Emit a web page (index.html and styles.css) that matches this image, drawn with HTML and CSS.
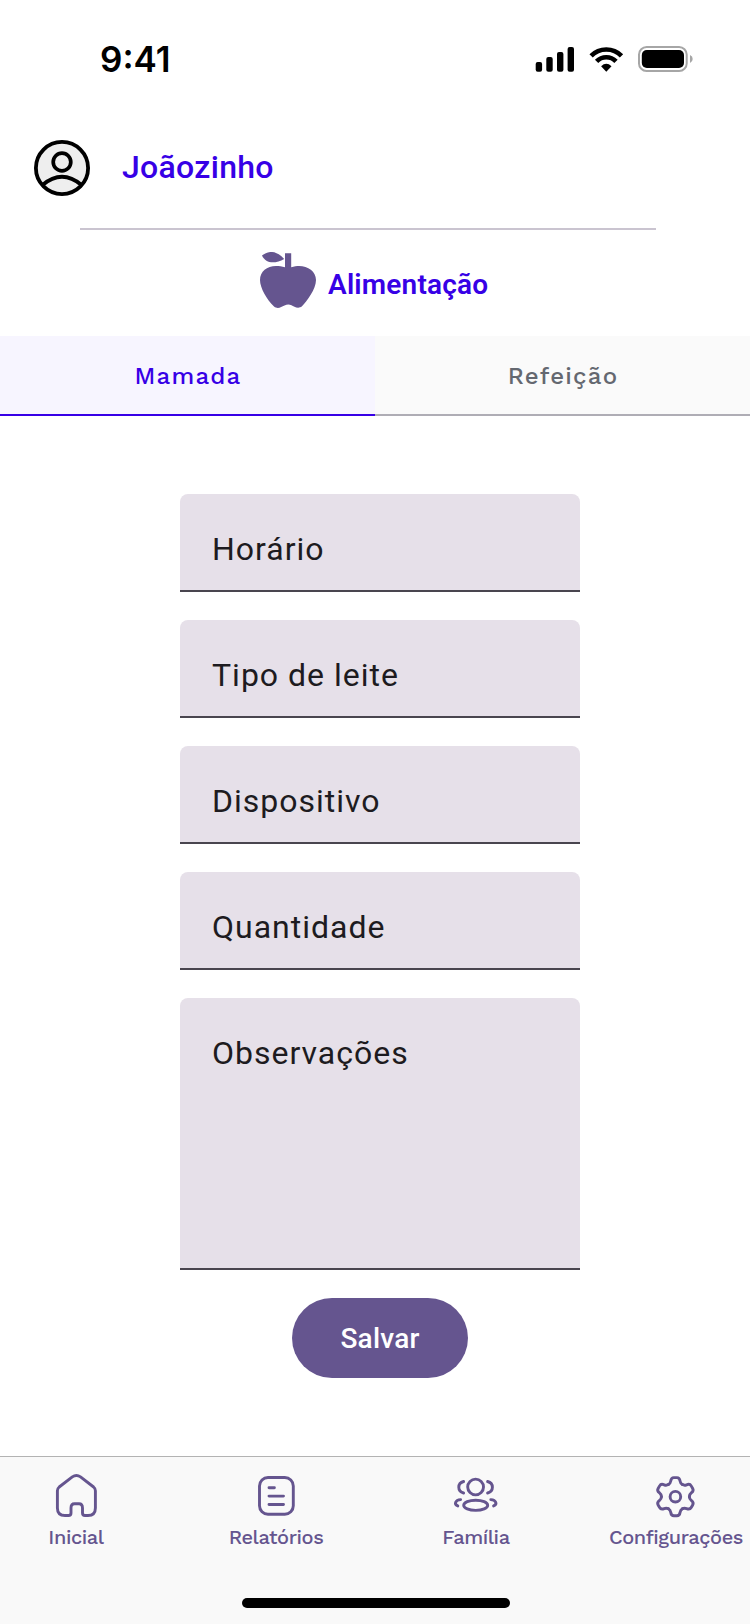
FILE: index.html
```html
<!DOCTYPE html>
<html lang="pt-BR">
<head>
<meta charset="utf-8">
<title>Alimentação</title>
<link rel="stylesheet" href="styles.css">
</head>
<body>
<div class="screen">
  <div class="status">
    <span class="time">9:41</span>
    <div class="status-icons">
      <svg width="39" height="26" viewBox="0 0 39 26"><rect x=".7" y="16" width="6.4" height="9.8" rx="2"/><rect x="11.3" y="11" width="6.4" height="14.8" rx="2"/><rect x="22" y="6" width="6.4" height="19.8" rx="2"/><rect x="32.6" y="1" width="6.4" height="24.8" rx="2"/></svg>
      <svg class="wifi" width="35" height="26" viewBox="0 -1 35 26"><g fill="none" stroke="#000" stroke-width="4.7"><path d="M2.1 8.8A21.5 21.5 0 0 1 32.5 8.8"/><path d="M7.6 14.3A13.7 13.7 0 0 1 27 14.3"/></g><path d="M17.3 24.7L12.1 19.3Q17.3 14.4 22.5 19.3Z"/></svg>
      <svg width="55" height="26" viewBox="0 0 55 26"><rect x="1" y="1" width="47.7" height="24" rx="7.6" fill="none" stroke="#a6a6a6" stroke-width="2"/><rect x="3.8" y="4" width="42.2" height="18" rx="5"/><path d="M52 9Q54.7 10.2 54.7 13T52 17Z" fill="#a6a6a6"/></svg>
    </div>
  </div>
  <header class="profile">
    <svg width="56" height="56" viewBox="0 0 56 56" fill="none" stroke="#000"><circle cx="28" cy="28" r="26.1" fill="#eee" stroke-width="3.8"/><circle cx="28" cy="22" r="8.8" stroke-width="3.7"/><path d="M8.5 45Q28 28.5 47.5 45" stroke-width="3.8"/></svg>
    <span class="name">Joãozinho</span>
  </header>
  <hr class="divider">
  <div class="heading">
    <svg width="56" height="56" viewBox="0 0 56 56" fill="#65558f"><path d="M2 3.6C8-1.5 16-2 24.2 7C16 11.500 6 12.500 2 3.600Z"/><path d="M25 1.300H31.200V15.300C34 14.300 37 14 39 14C48 14 56 19.500 56 28C56 37 47 49 42 54.300C38 57.500 34 54.500 31.500 53.200Q28 51.800 24.500 53.500C21 55 18 57.500 14 54.500C7 48 0 36 0 28C0 19.500 7 14 16 14C19 14 22 14.300 25 15.300Z"/></svg>
    <h1 class="title">Alimentação</h1>
  </div>
  <nav class="tabs">
    <a class="tab tab-active"><span class="tab-label">Mamada</span></a>
    <a class="tab"><span class="tab-label">Refeição</span></a>
  </nav>
  <main class="form">
    <div class="field">Horário</div>
    <div class="field">Tipo de leite</div>
    <div class="field">Dispositivo</div>
    <div class="field">Quantidade</div>
    <div class="field field-large">Observações</div>
    <button class="save" type="button">Salvar</button>
  </main>
  <footer class="bottom">
    <nav class="menu">
      <a class="item">
        <svg class="icon" viewBox="0 0 48 48"><path d="M5.400 18.800Q5.400 16.500 7.200 15L20.300 4.900Q24.400 2 28.500 4.900L41.600 15Q43.400 16.500 43.400 18.800V36Q43.400 43.500 36 43.500H33Q30.500 43.500 30.500 41V36Q30.500 31.800 27 31.800H22.500Q19 31.800 19 36V41Q19 43.500 16.500 43.500H13Q5.400 43.500 5.400 36Z"/></svg>
        <span class="label">Inicial</span>
      </a>
      <a class="item">
        <svg class="icon" viewBox="0 0 48 48"><rect x="7.500" y="5.500" width="33.800" height="36.800" rx="8.500"/><path d="M17 15.700H22.400M17 24.100H31.500M17 32.500H31.500"/></svg>
        <span class="label">Relatórios</span>
      </a>
      <a class="item">
        <svg class="icon" viewBox="0 0 48 48"><circle cx="23.600" cy="15" r="7.900"/><ellipse cx="23.700" cy="33.300" rx="12" ry="5.100"/><path d="M11.600 9.500C5.200 11.200 5.200 19.200 11.600 21M35.600 9.500C42 11.200 42 19.200 35.600 21M8.600 27.600C3.200 28 1.800 32.300 5.800 33.900M38.800 27.600C44.200 28 45.600 32.300 41.600 33.900"/></svg>
        <span class="label">Família</span>
      </a>
      <a class="item">
        <svg class="icon" viewBox="0 0 48 48"><defs><path id="tooth" d="M-7 -12.100C-5.300 -13.100 -4.900 -14.200 -4.700 -15.600C-4.300 -18.500 -3.300 -19.100 -1.500 -19.100H1.500C3.300 -19.100 4.300 -18.500 4.700 -15.600C4.900 -14.200 5.300 -13.100 7 -12.100"/></defs><g transform="translate(23.400 24.700)"><circle r="5.300"/><use href="#tooth"/><use href="#tooth" transform="rotate(60)"/><use href="#tooth" transform="rotate(120)"/><use href="#tooth" transform="rotate(180)"/><use href="#tooth" transform="rotate(240)"/><use href="#tooth" transform="rotate(300)"/></g></svg>
        <span class="label">Configurações</span>
      </a>
    </nav>
    <div class="home-bar"></div>
  </footer>
</div>
</body>
</html>
```
FILE: styles.css
```css
* { box-sizing: border-box; }
body { margin: 0; background: #fff; font-family: Roboto, "Liberation Sans", sans-serif; }
svg { display: block; flex: none; }
.screen { width: 750px; height: 1624px; display: flex; flex-direction: column; overflow: hidden; }
.status { height: 140px; padding: 38px 57px 0 100px; display: flex; justify-content: space-between; }
.time { font: 600 35px/42px Inter, sans-serif; }
.status-icons { display: flex; gap: 14px; padding-top: 8px; }
.wifi { margin-left: 1px; }
.profile { height: 88px; padding-left: 34px; display: flex; align-items: flex-start; gap: 32px; }
.name { font-size: 32px; font-weight: 500; line-height: 56px; color: #3700e6; margin-top: -1px; letter-spacing: 0.3px; }
.divider { width: 576px; height: 2px; margin: 0 0 0 80px; border: 0; background: #cac4d0; flex: none; }
.heading { height: 106px; padding: 22px 0 0 260px; display: flex; gap: 12px; }
.title { margin: 13px 0 0; font-size: 28px; line-height: 40px; font-weight: 600; color: #3700e6; letter-spacing: 0.2px; }
.tabs { display: grid; grid-template-columns: 1fr 1fr; height: 80px; }
.tab { background: #fafafa; border-bottom: 2px solid #afadb5; color: #646870; display: flex; align-items: center; justify-content: center; padding: 2px 0 0 1px; font-family: "Work Sans", Inter, sans-serif; font-size: 24px; font-weight: 500; letter-spacing: 1.2px; }
.tab-active { background: #f7f5ff; border-color: #3700e6; color: #3700e6; }
.form { flex: 1; padding: 78px 0 0 180px; display: flex; flex-direction: column; gap: 28px; }
.field { width: 400px; height: 98px; padding: 31px 32px; border-radius: 8px 8px 0 0; border-bottom: 2px solid #49454f; background: #e6e0e9; color: #1d1b20; font-size: 32px; line-height: 48px; letter-spacing: 1px; }
.field-large { height: 272px; }
.save { width: 176px; height: 80px; margin-left: 112px; padding: 2px 0 0; border: 0; border-radius: 40px; background: #65558f; color: #fff; font: 500 28px/40px Roboto, sans-serif; letter-spacing: 0.2px; }
.bottom { height: 168px; border-top: 1px solid #b3b3b3; background: #f9f9f9; display: flex; flex-direction: column; }
.menu { height: 141px; margin-left: -24px; padding-top: 15px; display: grid; grid-template-columns: repeat(4, 200px); }
.item { display: flex; flex-direction: column; align-items: center; color: #65558f; }
.icon { width: 48px; height: 48px; fill: none; stroke: #65558f; stroke-width: 2.9; stroke-linecap: round; stroke-linejoin: round; }
.label { margin-top: 5px; font: 500 20px/24px "Work Sans", Inter, sans-serif; letter-spacing: -0.42px; }
.home-bar { width: 268px; height: 10px; margin-left: 242px; border-radius: 5px; background: #000; }
```
